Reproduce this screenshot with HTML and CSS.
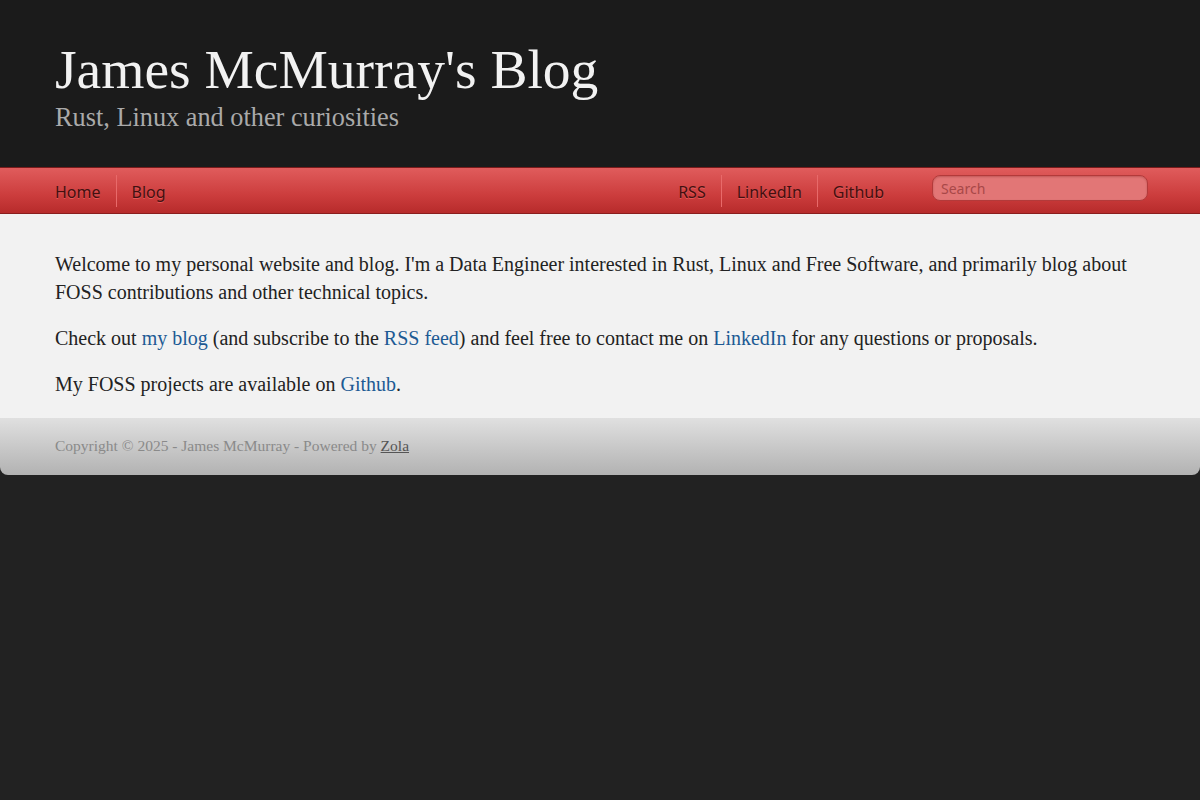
FILE: index.html
```html
<!DOCTYPE html>
<html>
  <head>
    <link rel="stylesheet" href="styles.css">
  </head>
  <body>
    <header class="site-header">
      <h1 class="site-title">James McMurray's Blog</h1>
      <h2 class="site-subtitle">Rust, Linux and other curiosities</h2>
    </header>
    <nav class="site-nav">
      <ul class="nav-links">
        <li><a href="#">Home</a></li>
        <li><a href="#">Blog</a></li>
      </ul>
      <ul class="nav-links nav-right">
        <li><a href="#">RSS</a></li>
        <li><a href="#">LinkedIn</a></li>
        <li><a href="#">Github</a></li>
      </ul>
      <form class="search">
        <input class="search-input" type="text" placeholder="Search">
      </form>
    </nav>
    <main class="content">
      <p>Welcome to my personal website and blog. I'm a Data Engineer interested in Rust, Linux and Free Software, and primarily blog about FOSS contributions and other technical topics.</p>
      <p>Check out <a href="#">my blog</a> (and subscribe to the <a href="#">RSS feed</a>) and feel free to contact me on <a href="#">LinkedIn</a> for any questions or proposals.</p>
      <p>My FOSS projects are available on <a href="#">Github</a>.</p>
    </main>
    <footer class="site-footer">
      Copyright &copy; 2025 - James McMurray - Powered by <a href="#">Zola</a>
    </footer>
  </body>
</html>
```

FILE: styles.css
```css
html {
  background: #222;
}

* {
  box-sizing: border-box;
}

body {
  margin: 0;
  font-family: "Liberation Serif", "DejaVu Serif", serif;
  color: #222;
}

.site-header {
  background: #1b1b1b;
  padding: 38px 55px 0;
  height: 167px;
}

.site-title {
  margin: 0;
  font-weight: normal;
  font-size: 55.5px;
  line-height: 64px;
  color: #f2f2f2;
}

.site-subtitle {
  margin: 1px 0 0;
  font-weight: normal;
  font-size: 26.3px;
  line-height: 30px;
  color: #aaa;
}

.site-nav {
  display: flex;
  align-items: center;
  height: 47px;
  padding: 0 52px 0 55px;
  background: linear-gradient(#e05c5c, #cc3d3d 60%, #b72b2b);
  border-top: 1px solid #7a1b1b;
  border-bottom: 1px solid #8a1e1e;
  font-family: "Noto Sans", "Liberation Sans", sans-serif;
}

.nav-links {
  display: flex;
  margin: 0;
  padding: 0;
  list-style: none;
}

.nav-links li {
  border-left: 1px solid #e86a6a;
  padding: 6px 15px 4px;
}

.nav-links li:first-child {
  border-left: none;
  padding-left: 0;
}

.nav-links a {
  color: #421010;
  text-decoration: none;
  font-size: 16px;
  text-shadow: 0 1px 0 rgba(255, 120, 120, 0.5);
}

.nav-right {
  margin-left: auto;
  margin-right: 33px;
}

.search {
  margin: 0 0 5px;
}

.search-input {
  width: 216px;
  height: 26px;
  padding: 2px 8px;
  border: 1px solid #b33a3a;
  border-radius: 8px;
  background: #e27676;
  font-family: "Noto Sans", "Liberation Sans", sans-serif;
  font-size: 14px;
  color: #6a2020;
  box-shadow: inset 0 1px 2px rgba(120, 20, 20, 0.3);
}

.search-input::placeholder {
  color: #a84848;
}

.content {
  background: #f2f2f2;
  padding: 36px 55px 2px;
  font-size: 20px;
  line-height: 28px;
}

.content p {
  margin: 0 0 18px;
}

.content a {
  color: #1d5a94;
  text-decoration: none;
}

.site-footer {
  height: 57px;
  padding: 17px 55px 0;
  background: linear-gradient(#e0e0e0, #b2b2b2);
  border-radius: 0 0 8px 8px;
  font-size: 15.5px;
  line-height: 22px;
  color: #8a8a8a;
}

.site-footer a {
  color: #555;
}
```
